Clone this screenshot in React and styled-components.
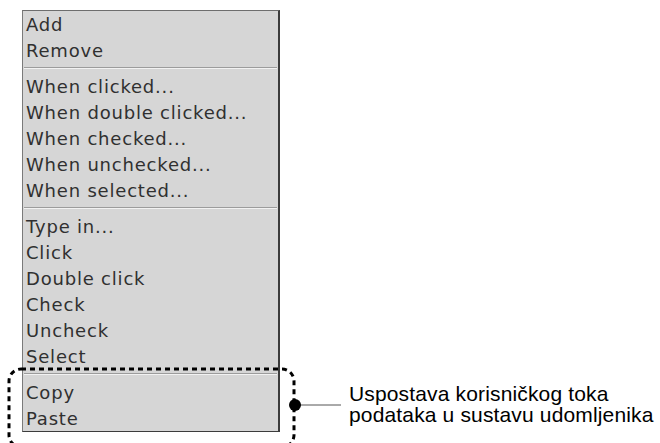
import React from 'react';
import styled, { createGlobalStyle } from 'styled-components';

const GlobalStyle = createGlobalStyle`
  html, body {
    margin: 0;
    padding: 0;
    background: #ffffff;
  }
`;

const menuGroups = [
    ['Add', 'Remove'],
    ['When clicked...', 'When double clicked...', 'When checked...', 'When unchecked...', 'When selected...'],
    ['Type in...', 'Click', 'Double click', 'Check', 'Uncheck', 'Select'],
    ['Copy', 'Paste'],
];

const App = () => {
    return (
        <Page>
            <GlobalStyle />
            <Menu>
                {menuGroups.map((group, gi) => (
                    <React.Fragment key={gi}>
                        {gi > 0 && <Separator><SeparatorLine /></Separator>}
                        {group.map(label => (
                            <MenuItem key={label}>{label}</MenuItem>
                        ))}
                    </React.Fragment>
                ))}
            </Menu>

            <Label>
                <LabelLine>Uspostava korisničkog toka</LabelLine>
                <LabelLine>podataka u sustavu udomljenika</LabelLine>
            </Label>

            {/* dashed callout round Copy / Paste */}
            <Callout width="660" height="443" viewBox="0 0 660 443">
                <rect x="9" y="369" width="285" height="78" rx="12" ry="12"
                    fill="none" stroke="#000" strokeWidth="3" strokeDasharray="5 4" />
                <line x1="295" y1="405" x2="341" y2="405" stroke="#555" strokeWidth="1" />
                <circle cx="295" cy="405" r="6" fill="#000" />
            </Callout>
        </Page>
    );
};

// Styled components
const Page = styled.div`
  position: relative;
  width: 660px;
  height: 443px;
  overflow: hidden;
  display: flex;
  align-items: flex-start;
  padding: 10px 0 0 22px;
  box-sizing: border-box;
`;

const Menu = styled.div`
  width: 258px;
  box-sizing: border-box;
  background: #d6d6d6;
  border-top: 1px solid #6e6e6e;
  border-left: 1px solid #7a7a7a;
  border-right: 2px solid #3c3c3c;
  border-bottom: 1px solid #3c3c3c;
`;

const MenuItem = styled.div`
  height: 26px;
  line-height: 27px;
  padding-left: 3px;
  font-family: "DejaVu Sans", Verdana, sans-serif;
  font-size: 18px;
  letter-spacing: 0.8px;
  color: #303030;
  white-space: nowrap;
`;

const Separator = styled.div`
  height: 10px;
  display: flex;
  align-items: center;
  padding: 0 1px;
`;

const SeparatorLine = styled.div`
  flex: 1;
  border-top: 1px solid #9c9c9c;
  border-bottom: 1px solid #f2f2f2;
`;

const Label = styled.div`
  align-self: flex-end;
  display: flex;
  flex-direction: column;
  margin: 0 0 18px 69px;
  font-family: "Liberation Sans", Arial, sans-serif;
  font-size: 21px;
  letter-spacing: 0.15px;
  color: #000;
`;

const LabelLine = styled.div`
  height: 21px;
  line-height: 21px;
  white-space: nowrap;
  overflow: visible;
`;

const Callout = styled.svg`
  position: absolute;
  left: 0;
  top: 0;
  pointer-events: none;
`;

export default App;
